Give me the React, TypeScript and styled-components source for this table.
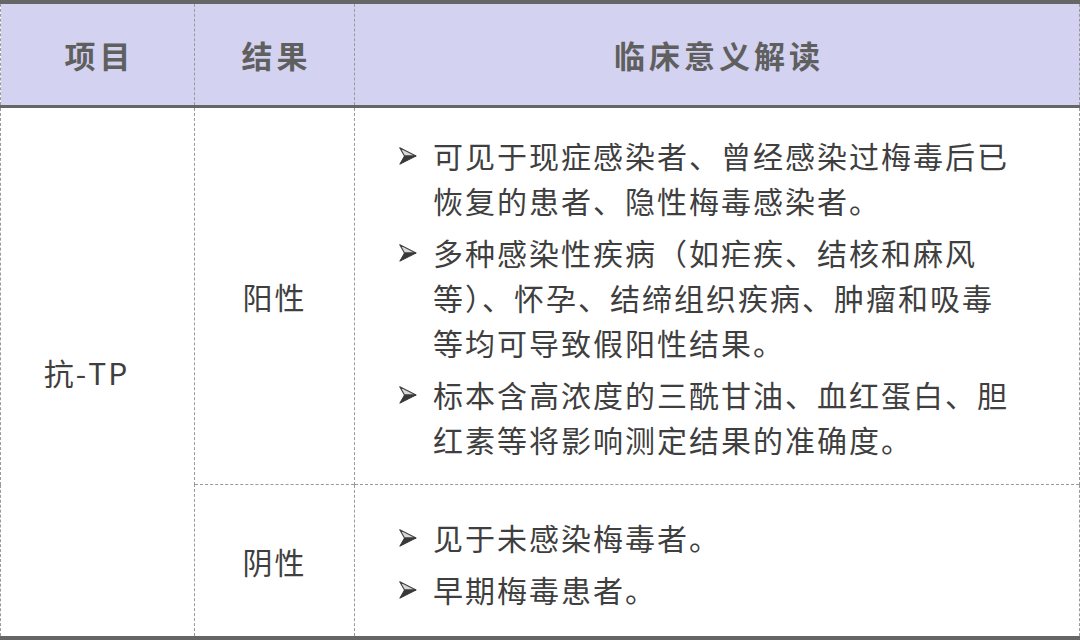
import React from "react";
import styled, { createGlobalStyle } from "styled-components";

const Global = createGlobalStyle`
  html, body { margin: 0; padding: 0; background: #ffffff; }
  body { font-family: "Noto Sans CJK SC", "Noto Sans", sans-serif; }
`;

const Table = styled.table`
  width: 1080px;
  border-collapse: collapse;
  table-layout: fixed;
  color: #3f3f3f;
`;

const HeadRow = styled.tr`
  background: #d3d2f0;
  border-top: 4px solid #666666;
  border-bottom: 3px solid #666666;
`;

const Th = styled.th`
  height: 101px;
  padding: 0 0 0 4px;
  border-left: 1px dashed #9a9a9a;
  border-right: 1px dashed #9a9a9a;
  font-size: 31px;
  font-weight: 700;
  letter-spacing: 4px;
  color: #5f5f5f;
  text-align: center;
  vertical-align: middle;
`;

const BodyRow = styled.tr<{ $last?: boolean }>`
  border-bottom: ${(p) => (p.$last ? "5px solid #666666" : "1px dashed #9a9a9a")};
`;

const Td = styled.td<{ $shift?: number }>`
  padding: 0 ${(p) => p.$shift ?? 0}px 0 0;
  border-left: 1px dashed #9a9a9a;
  border-right: 1px dashed #9a9a9a;
  font-size: 30px;
  letter-spacing: 2px;
  text-align: center;
  vertical-align: middle;
`;

const ContentTd = styled.td<{ $top: number; $bottom: number }>`
  padding: ${(p) => p.$top}px 56px ${(p) => p.$bottom}px 44px;
  border-left: 1px dashed #9a9a9a;
  border-right: 1px dashed #9a9a9a;
  vertical-align: top;
`;

const List = styled.ul`
  list-style: none;
  margin: 0;
  padding: 0;
  display: flex;
  flex-direction: column;
  gap: 7px;
`;

const Item = styled.li`
  display: flex;
  align-items: flex-start;
  font-size: 30px;
  line-height: 45px;
  letter-spacing: 2px;
`;

const Marker = styled.span`
  flex: 0 0 34px;
  height: 45px;
  display: flex;
  align-items: center;
`;

const Text = styled.span`
  flex: 1;
`;

const Arrow = () => (
  <svg width="18" height="18" viewBox="0 0 18 18">
    <polygon points="0.8,0.8 17,9 5.5,9" fill="#d8d8d8" stroke="#444" strokeWidth="1.2" strokeLinejoin="round" />
    <polygon points="5.5,9 17,9 0.8,17.2" fill="#383838" stroke="#383838" strokeWidth="1" strokeLinejoin="round" />
  </svg>
);

const Bullets = ({ items }: { items: string[] }) => (
  <List>
    {items.map((t) => (
      <Item key={t}>
        <Marker>
          <Arrow />
        </Marker>
        <Text>{t}</Text>
      </Item>
    ))}
  </List>
);

export default function App() {
  return (
    <>
      <Global />
      <Table>
        <colgroup>
          <col style={{ width: 194 }} />
          <col style={{ width: 160 }} />
          <col />
        </colgroup>
        <thead>
          <HeadRow>
            <Th>项目</Th>
            <Th>结果</Th>
            <Th>临床意义解读</Th>
          </HeadRow>
        </thead>
        <tbody>
          <BodyRow>
            <Td rowSpan={2} $shift={22}>抗-TP</Td>
            <Td>阳性</Td>
            <ContentTd $top={25} $bottom={22}>
              <Bullets
                items={[
                  "可见于现症感染者、曾经感染过梅毒后已恢复的患者、隐性梅毒感染者。",
                  "多种感染性疾病（如疟疾、结核和麻风等）、怀孕、结缔组织疾病、肿瘤和吸毒等均可导致假阳性结果。",
                  "标本含高浓度的三酰甘油、血红蛋白、胆红素等将影响测定结果的准确度。",
                ]}
              />
            </ContentTd>
          </BodyRow>
          <BodyRow $last>
            <Td>阴性</Td>
            <ContentTd $top={30} $bottom={24}>
              <Bullets items={["见于未感染梅毒者。", "早期梅毒患者。"]} />
            </ContentTd>
          </BodyRow>
        </tbody>
      </Table>
    </>
  );
}
